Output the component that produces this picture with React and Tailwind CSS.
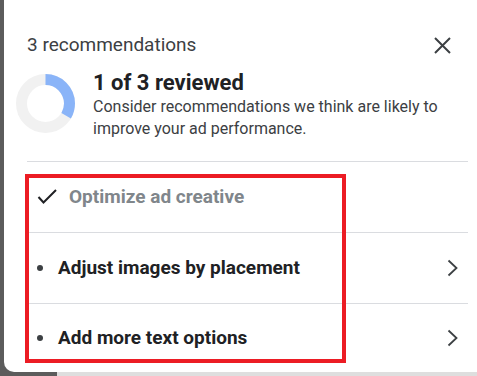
import React from "react";

const rows = [
  { label: "Optimize ad creative", done: true },
  { label: "Adjust images by placement", done: false },
  { label: "Add more text options", done: false },
];

function Donut() {
  // 1 of 3 reviewed -> one third of the ring in blue
  const r = 24;
  const c = 2 * Math.PI * r;
  return (
    <svg width="59" height="59" viewBox="0 0 59 59" className="shrink-0">
      <circle cx="29.5" cy="29.5" r={r} fill="none" stroke="#f1f1f1" strokeWidth="11" />
      <circle
        cx="29.5"
        cy="29.5"
        r={r}
        fill="none"
        stroke="#8ab4f8"
        strokeWidth="11"
        strokeDasharray={`${c / 3} ${c}`}
        transform="rotate(-90 29.5 29.5)"
      />
    </svg>
  );
}

function Row({ label, done, last }) {
  return (
    <div
      className={
        "ml-[23px] mr-[9px] pl-[10px] pr-[9px] flex items-center justify-between " +
        (last ? "flex-1" : "h-[71px] border-b border-[#dadce0]")
      }
    >
      {done ? (
        <div className="flex items-center">
          <svg width="20" height="16" viewBox="0 0 20 16" className="shrink-0">
            <polyline points="1.5,8 6.5,13.5 19,1" fill="none" stroke="#202124" strokeWidth="2" />
          </svg>
          <span className="ml-[12px] text-[19px] font-bold text-[#80868b]">{label}</span>
        </div>
      ) : (
        <div className="flex items-center">
          <span className="w-[6px] h-[6px] rounded-full bg-[#3c4043] shrink-0" />
          <span className="ml-[15px] text-[19px] font-bold text-[#202124]">{label}</span>
        </div>
      )}
      {!done && (
        <svg width="12" height="18" viewBox="0 0 12 18" className="shrink-0">
          <path d="M1.5 1.5 L9.5 9 L1.5 16.5" fill="none" stroke="#3c4043" strokeWidth="1.8" />
        </svg>
      )}
    </div>
  );
}

export default function App() {
  return (
    <div className="relative w-[477px] h-[376px] overflow-hidden bg-[#5c5c5c] font-['Roboto',sans-serif]">
      <div className="ml-[4px] h-[372px] bg-white rounded-bl-[10px] flex flex-col">
        {/* header */}
        <div className="mt-[33px] h-[24px] pl-[23px] pr-[26px] flex items-center justify-between">
          <span className="text-[19px] leading-[24px] text-[#3c4043]">3 recommendations</span>
          <svg width="18" height="18" viewBox="0 0 18 18">
            <path d="M2 2 L17 17 M17 2 L2 17" stroke="#3c4043" strokeWidth="2" />
          </svg>
        </div>

        {/* progress summary */}
        <div className="mt-[13px] pl-[12px] flex items-start">
          <div className="mt-[4px]">
            <Donut />
          </div>
          <div className="ml-[18px]">
            <div className="text-[22px] leading-[26px] font-bold text-[#202124]">1 of 3 reviewed</div>
            <div className="text-[16px] leading-[22px] text-[#3c4043]">
              Consider recommendations we think are likely to
              <br />
              improve your ad performance.
            </div>
          </div>
        </div>

        <div className="mt-[21px] ml-[23px] mr-[9px] h-px bg-[#dadce0]" />

        {/* recommendation list */}
        <div className="flex-1 flex flex-col">
          {rows.map((row, i) => (
            <Row key={row.label} {...row} last={i === rows.length - 1} />
          ))}
        </div>
      </div>
      <div className="ml-[57px] h-[4px] bg-[#dedede]" />

      {/* annotation box */}
      <div className="absolute left-[25px] top-[174px] w-[321px] h-[189px] border-4 border-[#ec1c24] pointer-events-none" />
    </div>
  );
}
